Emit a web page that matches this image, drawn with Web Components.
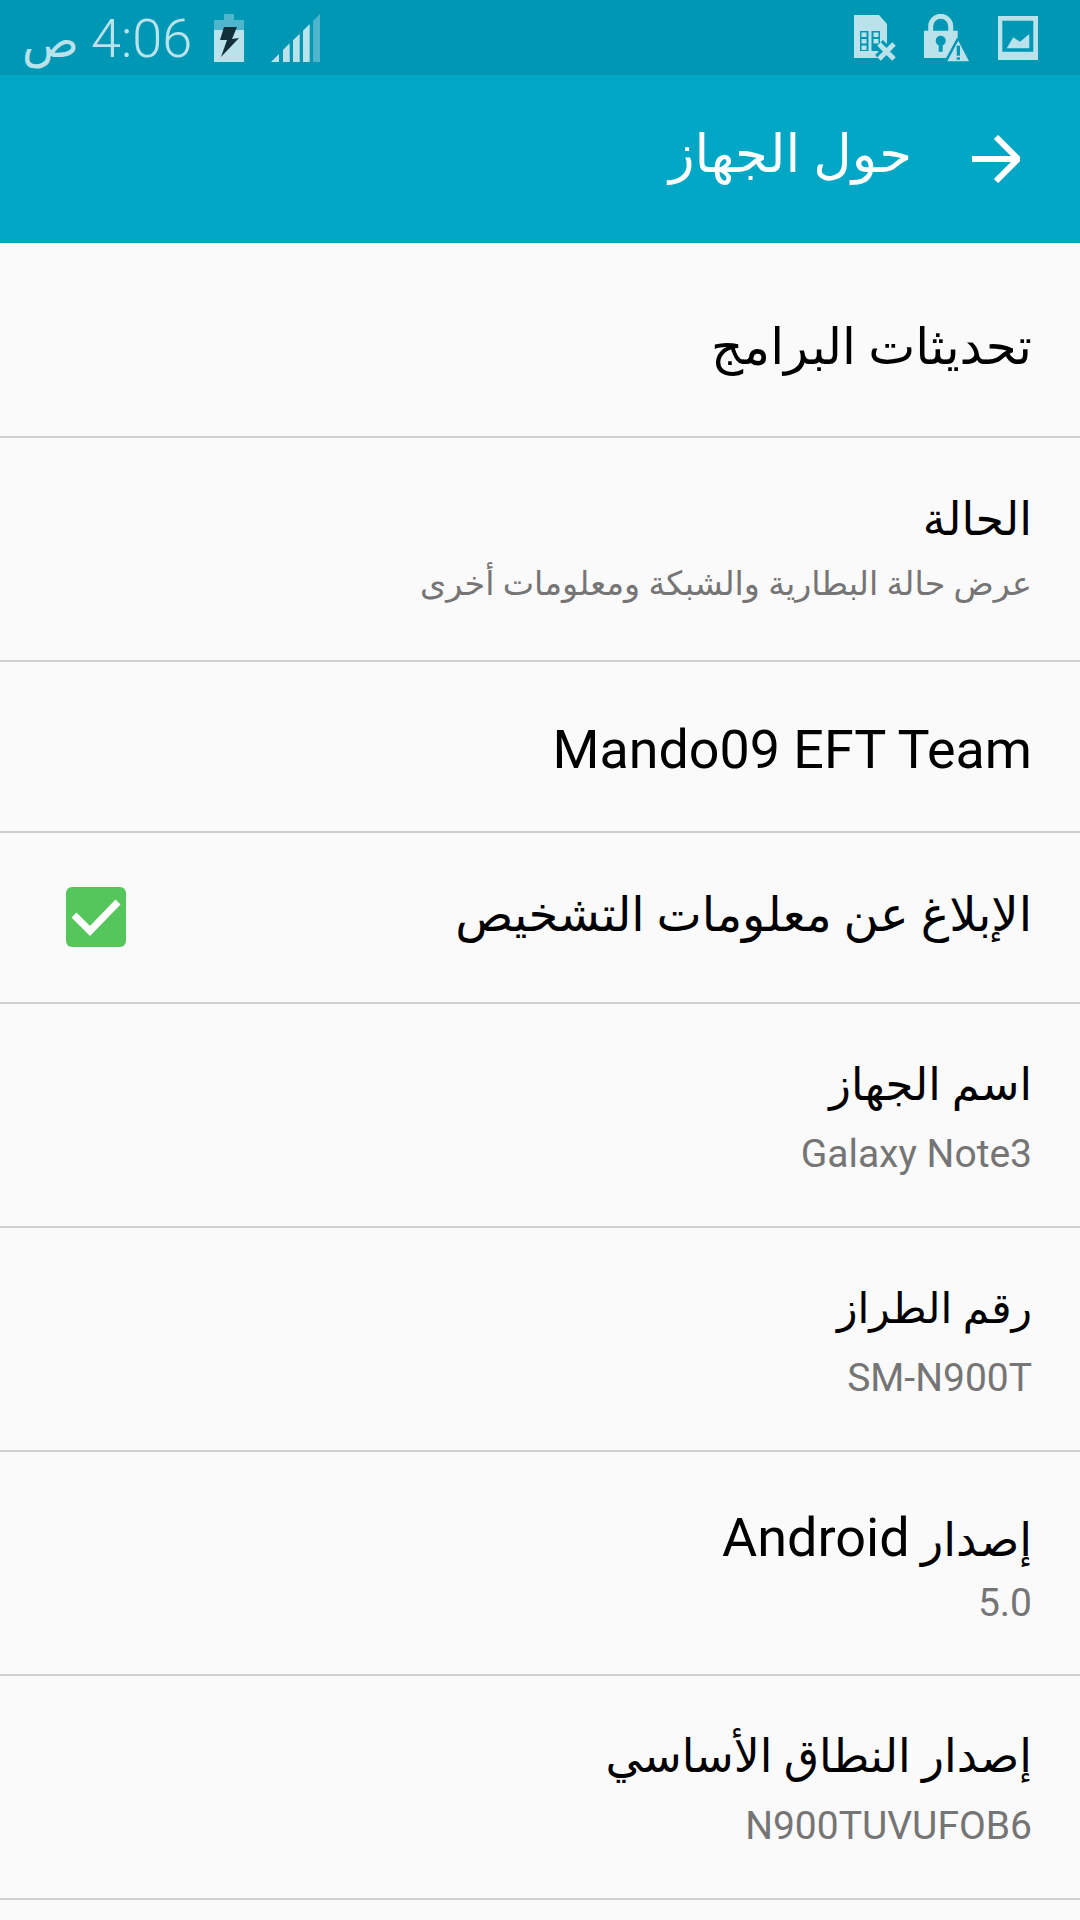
<!DOCTYPE html>
<html lang="ar">
<head>
<meta charset="utf-8">
<style>
html, body { margin: 0; padding: 0; background: #fafafa; }
body { width: 1080px; height: 1920px; overflow: hidden; font-family: Roboto, "DejaVu Sans", sans-serif; }
</style>
</head>
<body>
<status-bar></status-bar>
<app-bar>حول الجهاز</app-bar>
<setting-row style="--h:195px;--fs:50px;--top:14px">تحديثات البرامج</setting-row>
<setting-row sub="عرض حالة البطارية والشبكة ومعلومات أخرى" style="--h:224px;--fs:46px;--gap:9.5px;--bottom:3.5px">الحالة</setting-row>
<setting-row style="--h:171px;--fs:53.8px;--top:7px">Mando09 EFT Team</setting-row>
<setting-row checked style="--h:171px;--fs:48px;--lift:5px">الإبلاغ عن معلومات التشخيص</setting-row>
<setting-row sub="Galaxy Note3" style="--h:224px;--fs:45px">اسم الجهاز</setting-row>
<setting-row sub="SM-N900T" style="--h:224px;--fs:42.5px">رقم الطراز</setting-row>
<setting-row sub="5.0" style="--h:224px;--fs:46px;--gap:7px;--top:6px">إصدار <span>Android</span></setting-row>
<setting-row sub="N900TUVUFOB6" style="--h:224px;--fs:45.6px">إصدار النطاق الأساسي</setting-row>

<script>
class StatusBar extends HTMLElement {
  constructor() {
    super();
    this.attachShadow({ mode: 'open' }).innerHTML = `
      <style>
        :host { display: flex; justify-content: space-between; align-items: center; height: 75px; background: #0097b4; color: #b9e2ea; box-sizing: border-box; padding: 0 42px 0 22px; }
        .left, .right { display: flex; align-items: center; }
        .clock { display: flex; direction: rtl; align-items: baseline; gap: 12px; font-size: 54px; font-weight: 300; white-space: nowrap; line-height: 60px; margin-top: 4px; }
        .clock .ar { font-size: 47px; }
        svg { display: block; fill: #b9e2ea; }
      </style>
      <div class="left">
        <div class="clock"><span>4:06</span><span class="ar">ص</span></div>
        <svg width="30" height="48" viewBox="0 0 30 48" style="margin-left:22px">
          <path d="M10 0h10v6h10v10H0V6h10z" fill="#4fb5cd"/>
          <rect y="16" width="30" height="32"/>
          <path d="M10 13h13l-5 12 7-1L7 43l6-17H6z" fill="#12303a"/>
        </svg>
        <svg width="49" height="48" viewBox="0 0 49 48" style="margin-left:27px">
          <path d="M0 48l8-8v8zM12 48V36l6.700-6.700V48zM22 48V26.300L28.700 19.700V48zM32 48V16.700L38.700 10V48z"/>
          <path d="M42 48V7L49 0v48z" fill="#4fb5cd"/>
        </svg>
      </div>
      <div class="right">
        <svg width="42" height="46" viewBox="0 0 42 46">
          <path d="M0 0h25l8 9v34H0z"/>
          <path fill="#0097b4" d="M6 16h20v20H6z"/>
          <path d="M7.500 17.500h5v4.500h-5zM7.500 24h5v4.500h-5zM7.500 30.500h5v4.500h-5zM19.500 17.500h5v4.500h-5zM19.500 24h5v4.500h-5zM14.500 16h3v20h-3z"/>
          <path d="M25 29l15 15M40 29L25 44" fill="none" stroke="#0097b4" stroke-width="11"/>
          <path d="M25 29l15 15M40 29L25 44" fill="none" stroke="#b9e2ea" stroke-width="5"/>
        </svg>
        <svg width="45" height="48" viewBox="0 0 45 48" style="margin-left:28px">
          <path d="M6.700 18v-5.700a10 10 0 0 1 20 0V18" fill="none" stroke="#b9e2ea" stroke-width="5"/>
          <path d="M0 16.700h33.700V44H0z"/>
          <circle cx="16.700" cy="26.700" r="5" fill="#0097b4"/><rect x="14.700" y="27" width="4" height="10.700" fill="#0097b4"/>
          <path d="M34.300 26.700L45 47.300H23.300z" stroke="#0097b4" stroke-width="5" stroke-linejoin="round"/>
          <path d="M34.300 26.700L45 47.300H23.300z"/>
          <rect x="32.700" y="31.700" width="3.300" height="10" fill="#0097b4"/><rect x="32.700" y="43.300" width="3.300" height="2.500" fill="#0097b4"/>
        </svg>
        <svg width="40" height="44" viewBox="0 0 40 44" style="margin-left:29px">
          <path fill-rule="evenodd" d="M0 0h40v44H0zM4.300 4.700v31h31v-31z"/>
          <path d="M8.700 32.300L15.300 21.300 22 25.700 31.300 18v14.300z"/>
        </svg>
      </div>`;
  }
}
customElements.define('status-bar', StatusBar);

class AppBar extends HTMLElement {
  constructor() {
    super();
    this.attachShadow({ mode: 'open' }).innerHTML = `
      <style>
        :host { display: flex; direction: rtl; align-items: center; height: 168px; background: #02a7c6; color: #fff; box-sizing: border-box; padding: 0 60px 0 0; gap: 60px; }
        .title { font-size: 53px; line-height: 64px; margin-top: -10px; }
        svg { display: block; flex: none; }
      </style>
      <svg width="48" height="48" viewBox="0 0 48 48" fill="none" stroke="#fff" stroke-width="6"><path d="M0 24h45M24 2l22 22-22 22"/></svg>
      <span class="title"><slot></slot></span>`;
  }
}
customElements.define('app-bar', AppBar);

class SettingRow extends HTMLElement {
  constructor() {
    super();
    const sub = this.getAttribute('sub');
    const box = this.hasAttribute('checked');
    // latin subtitles are set bigger than arabic ones
    const subSize = sub && /[A-Za-z0-9]/.test(sub) ? 39 : 33.3;
    this.attachShadow({ mode: 'open' }).innerHTML = `
      <style>
        :host { display: flex; direction: rtl; align-items: center; justify-content: space-between; height: var(--h); box-sizing: border-box; padding: var(--top, 0) 48px var(--bottom, 0) 66px; border-bottom: 2px solid #cfcfcf; color: #000; }
        .main { font-size: var(--fs); line-height: 64px; margin-bottom: var(--lift, 0); }
        ::slotted(span) { font-size: 54px; }
        .sub { font-size: ${subSize}px; line-height: 48px; color: #757575; margin-top: var(--gap, 13px); }
        .check { width: 60px; height: 60px; border-radius: 6px; background: #55c65c; display: block; margin-bottom: 2px; }
      </style>
      <div>
        <div class="main"><slot></slot></div>
        ${sub ? `<div class="sub">${sub}</div>` : ''}
      </div>
      ${box ? `<svg class="check" viewBox="0 0 60 60" fill="none" stroke="#fff" stroke-width="7"><path d="M8 28l16 16 28-29"/></svg>` : ''}`;
  }
}
customElements.define('setting-row', SettingRow);
</script>
</body>
</html>
